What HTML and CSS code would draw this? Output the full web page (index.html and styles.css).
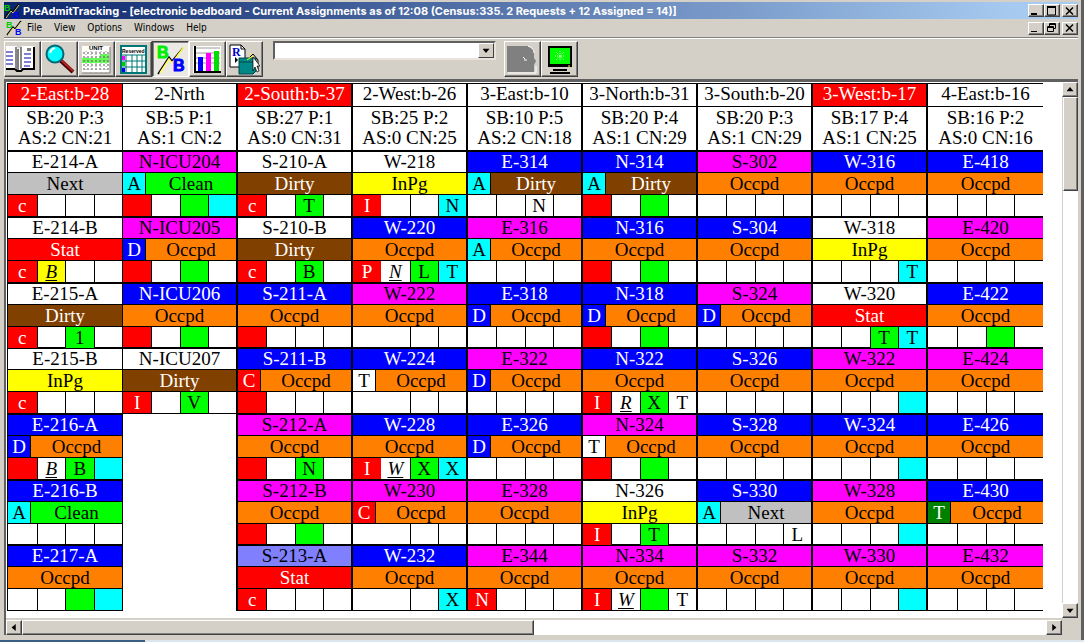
FILE: index.html
```html
<!DOCTYPE html>
<html lang="en">
<head>
<meta charset="utf-8">
<title>PreAdmitTracking</title>
<link rel="stylesheet" href="styles.css">
</head>
<body>
<svg class="defs" aria-hidden="true">
  <symbol id="logo" viewBox="0 0 16 16">
    <path d="M1 15 L7 7 L9 9 L15 1" fill="none" stroke="#000" stroke-width="1.4"/>
    <path d="M2 15 L7 8 L9 10 L15 2" fill="none" stroke="#ff6" stroke-width=".8"/>
    <text x="0" y="8" font-size="9" fill="#0c0">B</text>
    <text x="9" y="15" font-size="9" fill="#00f">B</text>
  </symbol>
</svg>
<div class="window">
  <header class="titlebar">
    <svg class="logo"><use href="#logo"/></svg>
    <h1>PreAdmitTracking - [electronic bedboard - Current Assignments as of 12:08 (Census:335. 2 Requests + 12 Assigned = 14)]</h1>
    <div class="controls">
      <button aria-label="Minimize"><svg viewBox="0 0 12 10"><path d="M2 8h6" /></svg></button>
      <button aria-label="Maximize"><svg viewBox="0 0 12 10"><path d="M2 1h9" /><path class="thin" d="M2.500 1v8h8v-8" /></svg></button>
      <button class="close" aria-label="Close"><svg viewBox="0 0 12 10"><path class="cross" d="M3 1.500l7 7M10 1.500l-7 7" /></svg></button>
    </div>
  </header>
  <nav class="menubar">
    <svg class="logo"><use href="#logo"/></svg>
    <button>File</button><button>View</button><button>Options</button><button>Windows</button><button>Help</button>
    <div class="controls">
      <button aria-label="Minimize board"><svg viewBox="0 0 12 10"><path class="thin" d="M2 8.500h6" /></svg></button>
      <button aria-label="Restore board"><svg viewBox="0 0 12 10"><path class="thin" d="M4.500 3v-2.500h6v5h-2M4 1.500h6M2.500 3.500h6v5h-6zM2 4.500h6" /></svg></button>
      <button class="close" aria-label="Close board"><svg viewBox="0 0 12 10"><path class="cross" d="M3 1.500l7 7M10 1.500l-7 7" /></svg></button>
    </div>
  </nav>
  <div class="toolbar">
    <button class="tool" aria-label="Census book"><svg viewBox="0 0 32 32">
      <path d="M0 3h10l3 3 3-3h12v23h-11l-2 2h-4l-2-2H0z" fill="#fff"/>
      <path d="M28 4v22H17l-2 2h-4l-2-2H0" fill="none" stroke="#000" stroke-width="2"/>
      <path d="M10 4v22M15 4v22" stroke="#888" stroke-width="2"/><path d="M12 6v21" stroke="#000"/>
      <path d="M0 9h7M0 13h7M0 17h7M0 21h7M18 11h7M18 15h7M18 19h7M18 23h6" stroke="#00a" stroke-width="1"/>
      <path d="M22 5v3M24 5v3" stroke="#000"/></svg></button>
    <button class="tool" aria-label="Search"><svg viewBox="0 0 32 32">
      <path d="M17 17L30 29" stroke="#400" stroke-width="4"/><path d="M17 16L30 28" stroke="#b22" stroke-width="2"/>
      <circle cx="12" cy="11" r="8.500" fill="#0ff" stroke="#067" stroke-width="2"/>
      <path d="M7 10q1-4 5-5" fill="none" stroke="#fff" stroke-width="2"/></svg></button>
    <button class="tool" aria-label="Unit calendar"><svg viewBox="0 0 32 32">
      <path d="M2 3h28v27H2z" fill="#fff"/><text x="9" y="7" font-size="6">UNIT</text>
      <path d="M20 11h9v5h-9zM2 15h27v5H2z" fill="#6f5"/>
      <path d="M2 30h28V4" fill="none" stroke="#777"/>
      <path d="M3 10h27M3 14h27M3 18h27M3 22h27M3 26h27" stroke="#555" stroke-dasharray="2 2"/>
      <path d="M6 8v22M11 8v22M16 8v22M21 8v22M26 8v22" stroke="#999" stroke-dasharray="1 2"/></svg></button>
    <button class="tool" aria-label="Reserved beds"><svg viewBox="0 0 32 32">
      <path d="M4 3h25v27H4z" fill="#fff" stroke="#077" stroke-width="2"/>
      <text x="5" y="10" font-size="5">Reserved</text>
      <path d="M4 12h25M4 18h25M4 24h25M9 12v18M15 12v18M20 12v18M25 12v18" stroke="#077"/>
      <path d="M5 13h3v4h-3z" fill="#f0f"/><path d="M5 19h3v4h-3z" fill="#0c0"/><path d="M5 25h3v4h-3z" fill="#00f"/></svg></button>
    <button class="tool pressed" aria-label="Bedboard" aria-pressed="true"><svg viewBox="0 0 32 32">
      <path d="M4 31L15 14l3 4L29 5" fill="none" stroke="#000" stroke-width="1.500"/>
      <path d="M6 30L15 16l3 4L30 4" fill="none" stroke="#ff5" stroke-width="1.500"/>
      <text x="3" y="15" font-size="16" fill="#0e0" stroke="#0e0">B</text><text x="19" y="28" font-size="16" fill="#00f" stroke="#00f">B</text></svg></button>
    <button class="tool" aria-label="Charts"><svg viewBox="0 0 32 32">
      <path d="M2 3h28v27H2z" fill="#fff"/>
      <path d="M5 5h24M5 10h24M5 15h24M5 20h24" stroke="#999"/>
      <path d="M4 3v26h26" fill="none" stroke="#000" stroke-width="2"/>
      <path d="M7 14h5v14H7z" fill="#00f"/><path d="M15 10h5v18h-5z" fill="#f0f"/><path d="M23 8h5v20h-5z" fill="#0d0"/></svg></button>
    <button class="tool" aria-label="Reports"><svg viewBox="0 0 32 32">
      <path d="M2 2h11l4 4v18H2z" fill="#fff" stroke="#000"/><path d="M13 2v4h4" fill="none" stroke="#000"/>
      <text class="serif" x="4" y="13" font-size="12" fill="#00c">R</text><path d="M7 14l3 3-3 3z"/>
      <path d="M11 15h17v13l-3 3H11z" fill="#088" stroke="#044"/><path d="M11 19h17" stroke="#044"/>
      <path d="M22 14l3-3 5 6v10" fill="none" stroke="#000"/><path d="M25 14v14l2-4 2 5 2-1-2-5h3z" fill="#fff" stroke="#000" stroke-width=".7"/><path d="M19 17l6-4M22 10l1 2" stroke="#ff0"/></svg></button>
    <div class="combo">
      <select aria-label="Patient"><option></option></select>
      <span class="combo-arrow" aria-hidden="true"><i class="arrow down"></i></span>
    </div>
    <button class="tool" disabled aria-label="Phone"><svg viewBox="0 0 32 32">
      <path d="M1 3h21l6 4v8l2 3-2 4v7H1z" fill="#808080"/>
      <path d="M2 30h28v-7M22 3q6 2 6 7M17 14l2 2M18 17h3" fill="none" stroke="#fff"/></svg></button>
    <button class="tool" aria-label="Monitor"><svg viewBox="0 0 32 32">
      <path d="M5 3h24v21H5z"/><path d="M7 5h20v16H7z" fill="#0f0"/>
      <path d="M17 8v10M12 13h10M13 9l8 8M21 9l-8 8" stroke="#dfc" stroke-dasharray="1 1"/>
      <path d="M25 23h2" stroke="#ff0"/>
      <path d="M10 27h14M7 30h20" stroke="#000" stroke-width="2"/></svg></button>
  </div>
  <main class="client">
    <div class="board-view"><table class="board" id="board"></table></div>
    <div class="scroll vertical">
      <button aria-label="Scroll up"><i class="arrow up"></i></button>
      <div class="track"><div class="thumb"></div></div>
      <button aria-label="Scroll down"><i class="arrow down"></i></button>
    </div>
    <div class="scroll horizontal">
      <button aria-label="Scroll left"><i class="arrow left"></i></button>
      <div class="track"><div class="thumb"></div></div>
      <button aria-label="Scroll right"><i class="arrow right"></i></button>
    </div>
  </main>
</div>
<div class="desktop"></div>
<script src="board.js"></script>
</body>
</html>
```

FILE: styles.css
```css
* { box-sizing: border-box; }
html, body { height: 100%; margin: 0; }
body {
  display: flex;
  flex-direction: column;
  overflow: hidden;
  background: #d4d0c8;
  color: #000;
  font: 10px/16px "DejaVu Sans Condensed", "DejaVu Sans", sans-serif;
}
button { margin: 0; padding: 0; border: 0; background: none; color: inherit; font: inherit; }
.defs { display: none; }
svg text { font-family: "Liberation Sans", sans-serif; font-weight: bold; }
svg text.serif { font-family: "Liberation Serif", serif; }

.window {
  flex: 1;
  min-height: 0;
  display: flex;
  flex-direction: column;
  padding: 2px 3px 5px 4px;
  border-right: 3px solid #606060;
}
.desktop { height: 2px; background: linear-gradient(90deg, #3a5f85 145px, #dce6ee 145px); }

.titlebar {
  display: flex;
  align-items: center;
  height: 17px;
  background: linear-gradient(90deg, #0a246a, #a6caf0 94%);
  color: #fff;
}
.logo { width: 16px; height: 16px; flex: none; }
.titlebar h1 { flex: 1; margin: 0 0 0 3px; font: bold 11px/16px Inter, sans-serif; white-space: nowrap; overflow: hidden; }
.controls { display: flex; margin-left: auto; background: #d4d0c8; }
.controls button {
  width: 16px;
  height: 13px;
  background: #d4d0c8;
  border: 1px solid;
  border-color: #fff #404040 #404040 #fff;
  box-shadow: inset -1px -1px #808080;
}
.controls .close { margin-left: 2px; }
.controls svg { display: block; width: 12px; height: 10px; }
.controls path { fill: none; stroke: #000; stroke-width: 2; }
.controls path.thin { stroke-width: 1; }
.controls path.cross { stroke-width: 1.5; }

.menubar {
  display: flex;
  align-items: center;
  height: 19px;
  border-bottom: 1px solid #808080;
  box-shadow: 0 1px #fff;
}
.menubar .logo { margin: 0 1px 0 2px; }
.menubar > button { padding: 0 8px 0 4px; }

.toolbar { display: flex; align-items: flex-start; height: 41px; padding-top: 3px; }
.tool {
  width: 37px;
  height: 36px;
  padding: 1px;
  flex: none;
  border: 1px solid;
  border-color: #fff #404040 #404040 #fff;
  box-shadow: inset -1px -1px #808080;
}
.tool svg { display: block; width: 32px; height: 32px; }
.tool.pressed {
  border-color: #404040 #fff #fff #404040;
  box-shadow: inset 1px 1px #808080;
  background: #ece9e4;
}
.combo {
  display: grid;
  grid-template-columns: 1fr 16px;
  width: 223px;
  height: 19px;
  margin: 0 8px 0 10px;
  background: #fff;
  border: 2px solid;
  border-color: #606060 #e8e4dc #e8e4dc #606060;
}
.combo select { grid-area: 1 / 1 / 2 / 3; appearance: none; border: 0; background: #fff; min-width: 0; height: 15px; }
.combo-arrow {
  grid-area: 1 / 2;
  display: grid;
  place-items: center;
  pointer-events: none;
  background: #d4d0c8;
  border: 1px solid;
  border-color: #fff #404040 #404040 #fff;
}

.client {
  flex: 1;
  min-height: 0;
  display: grid;
  grid-template: minmax(0, 1fr) 16px / minmax(0, 1fr) 16px;
  gap: 1px 0;
  border: solid;
  border-width: 3px 0 0 2px;
  border-color: #606060;
}
.board-view { overflow: hidden; padding: 1px 19px 0 1px; background: #fff; }

.arrow { display: block; width: 7px; height: 7px; background: #000; }
.arrow.up { clip-path: polygon(50% 15%, 100% 75%, 0 75%); }
.arrow.down { clip-path: polygon(0 25%, 100% 25%, 50% 85%); }
.arrow.left { clip-path: polygon(15% 50%, 75% 0, 75% 100%); }
.arrow.right { clip-path: polygon(85% 50%, 25% 0, 25% 100%); }
.scroll { display: flex; background: #fff; }
.scroll.vertical { flex-direction: column; }
.scroll.horizontal { border-top: 1px solid #d4d0c8; }
.scroll button, .thumb {
  background: #d4d0c8;
  border: 1px solid;
  border-color: #fff #404040 #404040 #fff;
  box-shadow: inset -1px -1px #808080;
}
.scroll button { display: grid; place-items: center; width: 16px; height: 15px; flex: none; }
.track { flex: 1; border: 0 solid #d4d0c8; }
.vertical .track { border-left-width: 1px; }
.vertical .thumb { height: 18.5%; }
.horizontal .thumb { width: 50%; height: 100%; }

.board {
  width: 100%;
  table-layout: fixed;
  border-collapse: separate;
  border-spacing: 0;
  border: solid #000;
  border-width: 1px 0 0 1px;
  font: 19px/21px "Liberation Serif", "Times New Roman", serif;
  text-align: center;
  white-space: nowrap;
}
.board th, .board td { padding: 0; border-right: 2px solid #000; font-weight: normal; overflow: hidden; }
.board tr > :first-child { border-right-width: 1px; }
.board tr > :last-child { border-right: 0; }
.board thead th { height: 23px; padding-bottom: 2px; line-height: 20px; border-bottom: 1px solid #000; }
.board thead td { height: 44px; padding-bottom: 2px; line-height: 20px; border-bottom: 1px solid #000; }
.board .alert { background: #f00; color: #fff; }

.name { height: 21px; line-height: 20px; border-top: 1px solid #000; }
.status { display: flex; height: 22px; border-top: 1px solid #000; }
.status span { flex: 1; }
.status .flag { flex: none; width: 23px; border-right: 1px solid #000; }
.codes { display: grid; grid-template-columns: repeat(4, minmax(0, 1fr)); height: 23px; border: solid #000; border-width: 1px 0; }
tbody tr:nth-child(3n) .codes { height: 22px; }
.codes span + span { border-left: 1px solid #000; }
.west2 .codes span:nth-child(2) { border-left: 0; }
.italic { font-style: italic; text-decoration: underline; text-underline-offset: 2px; text-decoration-thickness: 1px; }

.red { background: #f00; color: #fff; }
.blue { background: #00f; color: #fff; }
.magenta { background: #f0f; }
.lilac { background: #8080ff; }
.green { background: #0f0; }
.cyan { background: #0ff; }
.yellow { background: #ff0; }
.forest { background: #008000; color: #fff; }
.gray { background: #c0c0c0; }
.brown { background: #804000; color: #fff; }
.orange { background: #ff8000; }
```

FILE: board.js
```js
// Bed entry: name, name colour, flag, status, four code cells.
// A code cell is "colour" or "colour=letter"; "." is an empty cell.
const COLORS = {
  r: "red", b: "blue", m: "magenta", l: "lilac", g: "green", c: "cyan",
  y: "yellow", f: "forest", w: "", wi: "italic", yi: "yellow italic"
};
const STATUS = { Next: "gray", Clean: "green", Stat: "red", Dirty: "brown", Occpd: "orange", InPg: "yellow" };
const E = ". . . .";

const UNITS = [
  { title: "2-East:b-28", alert: true, counts: ["SB:20 P:3", "AS:2 CN:21"], beds: [
    ["E-214-A", "w", "", "Next", "r=c . . ."], ["E-214-B", "w", "", "Stat", "r=c yi=B . ."],
    ["E-215-A", "w", "", "Dirty", "r=c . g=1 ."], ["E-215-B", "w", "", "InPg", "r=c . . ."],
    ["E-216-A", "b", "b=D", "Occpd", "r wi=B g=B c"], ["E-216-B", "b", "c=A", "Clean", E],
    ["E-217-A", "b", "", "Occpd", ". . g c"]] },
  { title: "2-Nrth", counts: ["SB:5 P:1", "AS:1 CN:2"], beds: [
    ["N-ICU204", "m", "c=A", "Clean", "r . g c"], ["N-ICU205", "m", "b=D", "Occpd", "r . g ."],
    ["N-ICU206", "b", "", "Occpd", "r . g ."], ["N-ICU207", "w", "", "Dirty", "r=I . g=V ."]] },
  { title: "2-South:b-37", alert: true, counts: ["SB:27 P:1", "AS:0 CN:31"], beds: [
    ["S-210-A", "w", "", "Dirty", "r=c . g=T ."], ["S-210-B", "w", "", "Dirty", "r=c . g=B ."],
    ["S-211-A", "b", "", "Occpd", "r . . ."], ["S-211-B", "b", "r=C", "Occpd", "r . . ."],
    ["S-212-A", "m", "", "Occpd", "r . g=N ."], ["S-212-B", "m", "", "Occpd", "r . g ."],
    ["S-213-A", "l", "", "Stat", "r=c . . ."]] },
  { title: "2-West:b-26", css: "west2", counts: ["SB:25 P:2", "AS:0 CN:25"], beds: [
    ["W-218", "w", "", "InPg", "r=I . . c=N"], ["W-220", "b", "", "Occpd", "r=P wi=N g=L c=T"],
    ["W-222", "m", "", "Occpd", E], ["W-224", "b", "w=T", "Occpd", E],
    ["W-228", "b", "", "Occpd", "r=I wi=W g=X c=X"], ["W-230", "m", "r=C", "Occpd", E],
    ["W-232", "b", "", "Occpd", ". . . c=X"]] },
  { title: "3-East:b-10", counts: ["SB:10 P:5", "AS:2 CN:18"], beds: [
    ["E-314", "b", "c=A", "Dirty", ". . w=N ."], ["E-316", "m", "c=A", "Occpd", E],
    ["E-318", "b", "b=D", "Occpd", E], ["E-322", "m", "b=D", "Occpd", E],
    ["E-326", "b", "b=D", "Occpd", E], ["E-328", "m", "", "Occpd", E],
    ["E-344", "m", "", "Occpd", "r=N . . ."]] },
  { title: "3-North:b-31", counts: ["SB:20 P:4", "AS:1 CN:29"], beds: [
    ["N-314", "b", "c=A", "Dirty", "r . g ."], ["N-316", "b", "", "Occpd", "r . g ."],
    ["N-318", "b", "b=D", "Occpd", "r . g ."], ["N-322", "b", "", "Occpd", "r=I wi=R g=X w=T"],
    ["N-324", "m", "w=T", "Occpd", "r . g ."], ["N-326", "w", "", "InPg", "r=I . g=T ."],
    ["N-334", "m", "", "Occpd", "r=I wi=W g w=T"]] },
  { title: "3-South:b-20", counts: ["SB:20 P:3", "AS:1 CN:29"], beds: [
    ["S-302", "m", "", "Occpd", E], ["S-304", "b", "", "Occpd", E],
    ["S-324", "m", "b=D", "Occpd", E], ["S-326", "b", "", "Occpd", E],
    ["S-328", "b", "", "Occpd", E], ["S-330", "b", "c=A", "Next", ". . . w=L"],
    ["S-332", "m", "", "Occpd", E]] },
  { title: "3-West:b-17", alert: true, counts: ["SB:17 P:4", "AS:1 CN:25"], beds: [
    ["W-316", "b", "", "Occpd", E], ["W-318", "w", "", "InPg", ". . . c=T"],
    ["W-320", "w", "", "Stat", ". . g=T c=T"], ["W-322", "m", "", "Occpd", ". . . c"],
    ["W-324", "b", "", "Occpd", ". . . c"], ["W-328", "m", "", "Occpd", ". . . c"],
    ["W-330", "m", "", "Occpd", ". . . c"]] },
  { title: "4-East:b-16", counts: ["SB:16 P:2", "AS:0 CN:16"], beds: [
    ["E-418", "b", "", "Occpd", E], ["E-420", "m", "", "Occpd", E],
    ["E-422", "b", "", "Occpd", ". . g ."], ["E-424", "m", "", "Occpd", E],
    ["E-426", "b", "", "Occpd", E], ["E-430", "b", "f=T", "Occpd", E],
    ["E-432", "m", "", "Occpd", E]] }
];

function cell(code, extra = "") {
  const [color, letter = ""] = code.split("=");
  return `<span class="${extra} ${COLORS[color] || ""}">${letter}</span>`;
}

function bedCell(unit, row) {
  const bed = unit.beds[row];
  if (!bed) return "<td></td>";
  const [name, color, flag, status, codes] = bed;
  return `<td class="${unit.css || ""}">
    <div class="name ${COLORS[color]}">${name}</div>
    <div class="status">${flag ? cell(flag, "flag") : ""}<span class="${STATUS[status]}">${status}</span></div>
    <div class="codes">${codes.split(" ").map(c => cell(c)).join("")}</div></td>`;
}

const rows = [0, 1, 2, 3, 4, 5, 6];
document.getElementById("board").innerHTML =
  `<thead><tr>${UNITS.map(u => `<th scope="col" class="${u.alert ? "alert" : ""}">${u.title}</th>`).join("")}</tr>
  <tr>${UNITS.map(u => `<td>${u.counts.join("<br>")}</td>`).join("")}</tr></thead>
  <tbody>${rows.map(r => `<tr>${UNITS.map(u => bedCell(u, r)).join("")}</tr>`).join("")}</tbody>`;
```
